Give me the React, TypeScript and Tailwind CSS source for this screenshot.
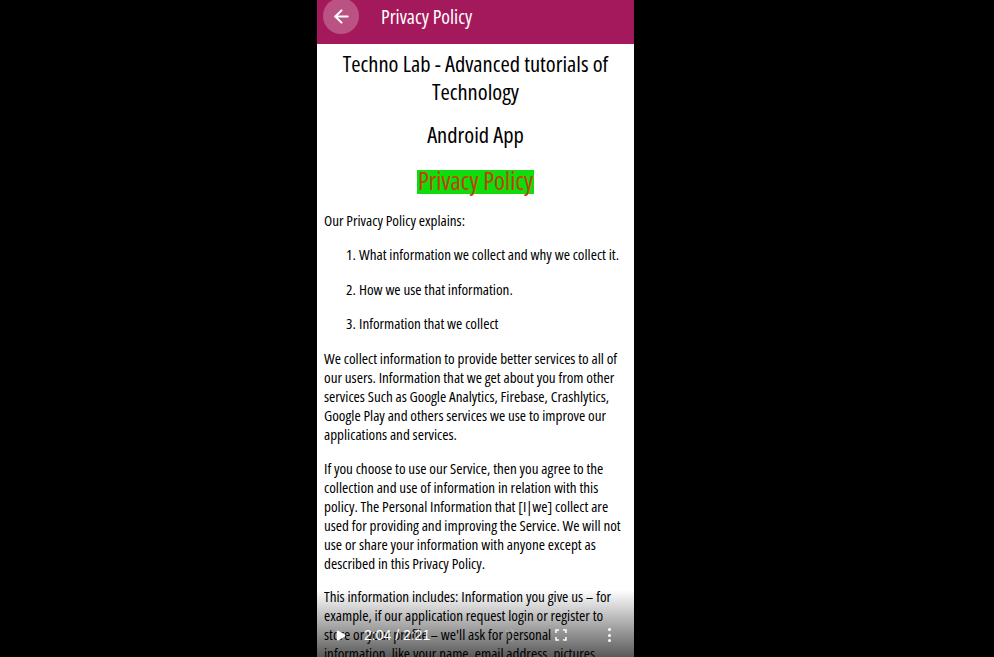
import { ArrowLeft, Play } from "lucide-react";

const reasons = [
  "What information we collect and why we collect it.",
  "How we use that information.",
  "Information that we collect",
];

const paragraphs = [
  [
    "We collect information to provide better services to all of",
    "our users. Information that we get about you from other",
    "services Such as Google Analytics, Firebase, Crashlytics,",
    "Google Play and others services we use to improve our",
    "applications and services.",
  ],
  [
    "If you choose to use our Service, then you agree to the",
    "collection and use of information in relation with this",
    "policy. The Personal Information that [I|we] collect are",
    "used for providing and improving the Service. We will not",
    "use or share your information with anyone except as",
    "described in this Privacy Policy.",
  ],
  [
    "This information includes: Information you give us – for",
    "example, if our application request login or register to",
    "store or your profile – we'll ask for personal",
    "information, like your name, email address, pictures,",
  ],
];

export default function App() {
  return (
    <div className="h-[657px] w-full overflow-hidden bg-black pl-[317px] font-['Open_Sans',sans-serif] text-black [font-stretch:75%]">
      <div className="relative h-[657px] w-[317px] overflow-hidden bg-white">
        {/* App bar */}
        <div className="flex h-[44px] items-start bg-[#a3195b] pl-[6px]">
          <div className="flex h-[36px] w-[36px] -translate-y-[2px] items-center justify-center rounded-full bg-white/25">
            <ArrowLeft className="h-[21px] w-[21px] text-white" strokeWidth={2.4} />
          </div>
          <span className="ml-[22px] mt-[5px] text-[19.8px] font-medium leading-[24px] text-white">Privacy Policy</span>
        </div>

        {/* Policy text */}
        <div className="px-[7px] text-[15.1px] leading-[19px]">
          <h1 className="mt-[6px] text-center text-[22.5px] leading-[28px]">
            Techno Lab - Advanced tutorials of
            <br />
            Technology
          </h1>
          <h2 className="mt-[15px] text-center text-[22.5px] leading-[28px]">Android App</h2>
          <div className="mt-[21px] flex justify-center">
            <span className="h-[24px] bg-[#0fdc0a] px-px text-[25px] leading-[21px] text-[#c4400a]">Privacy Policy</span>
          </div>

          <p className="mt-[17px]">Our Privacy Policy explains:</p>

          <ol className="mt-[15px] flex flex-col gap-[15.5px] pb-[1.4px] pl-[35px]">
            {reasons.map((reason, i) => (
              <li key={reason} className="relative whitespace-nowrap">
                <span className="absolute -left-[13px]">{i + 1}.</span>
                {reason}
              </li>
            ))}
          </ol>

          {paragraphs.map((lines) => (
            <p key={lines[0]} className="mt-[14.6px] whitespace-nowrap">
              {lines.map((line) => (
                <span key={line} className="block">
                  {line}
                </span>
              ))}
            </p>
          ))}
        </div>

        {/* Video player controls */}
        <div className="absolute bottom-0 left-0 right-0 flex h-[67px] items-end bg-gradient-to-b from-black/0 to-black/65 pb-[12px] pl-[17px] pr-[23px]">
          <div className="flex h-[20px] w-full items-center text-white">
            <Play className="h-[13px] w-[13px] fill-white" strokeWidth={0} />
            <span className="ml-[17px] font-['Liberation_Sans',sans-serif] text-[14px] leading-[20px]">2:04 / 2:21</span>
            <svg viewBox="0 0 12 14" className="ml-[74px] h-[14px] w-[12px] text-white/25" fill="none" stroke="currentColor" strokeWidth="1.5">
              <path d="M2 2c3 2 3 8 0 10M7 1c4 3 4 9 0 12" />
            </svg>
            <svg viewBox="0 0 12 12" className="ml-[39px] h-[12px] w-[12px]" fill="none" stroke="currentColor" strokeWidth="1.5">
              <path d="M1 4V1h3M8 1h3v3M11 8v3H8M4 11H1V8" />
            </svg>
            <div className="ml-auto flex flex-col gap-[2.5px]">
              <span className="h-[3px] w-[3px] rounded-full bg-white" />
              <span className="h-[3px] w-[3px] rounded-full bg-white" />
              <span className="h-[3px] w-[3px] rounded-full bg-white" />
            </div>
          </div>
        </div>
      </div>
    </div>
  );
}
